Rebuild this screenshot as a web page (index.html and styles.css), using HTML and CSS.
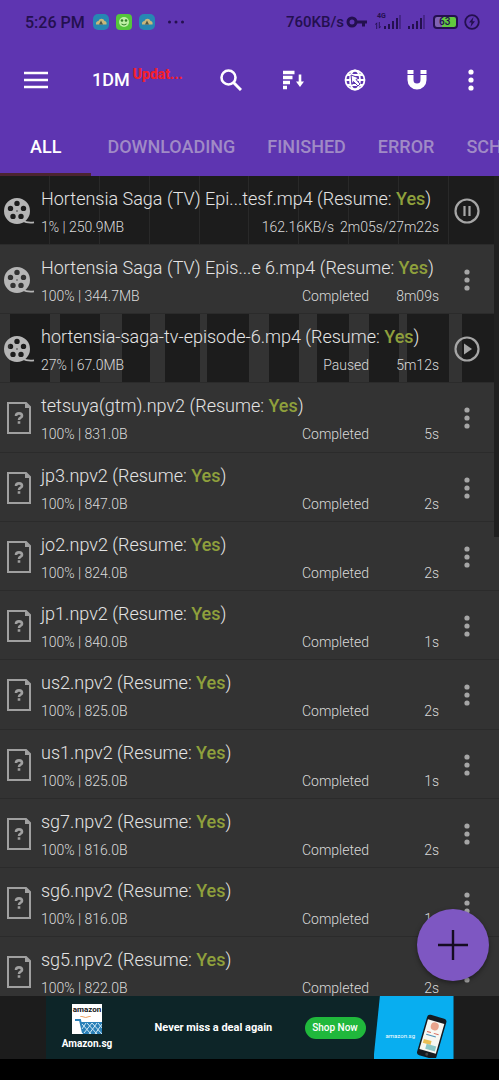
FILE: index.html
```
<!DOCTYPE html>
<html lang="en">
<head>
<meta charset="utf-8">
<meta name="viewport" content="width=device-width, initial-scale=1">
<title>1DM</title>
<link rel="stylesheet" href="styles.css">
</head>
<body>
<svg class="sprite" aria-hidden="true">
  <symbol id="reel" viewBox="0 0 32 28">
    <path fill="currentColor" fill-rule="evenodd" d="M14 1a13 13 0 1 0 0 26a13 13 0 1 0 0-26zM14 3.700a2.700 2.700 0 1 1 0 5.400a2.700 2.700 0 1 1 0-5.400zM7.500 8.700a2.700 2.700 0 1 1 0 5.400a2.700 2.700 0 1 1 0-5.400zM20.500 8.700a2.700 2.700 0 1 1 0 5.400a2.700 2.700 0 1 1 0-5.400zM10 16.700a2.700 2.700 0 1 1 0 5.400a2.700 2.700 0 1 1 0-5.400zM18 16.700a2.700 2.700 0 1 1 0 5.400a2.700 2.700 0 1 1 0-5.400zM14 13.300a.7 .7 0 1 1 0 1.400a.7 .7 0 1 1 0-1.400z"/>
    <path fill="none" stroke="currentColor" stroke-width="1.800" d="M19 23.500c4 2 8 2.500 12 1.800"/>
  </symbol>
  <symbol id="file" viewBox="0 0 24 32">
    <path fill="none" stroke="currentColor" stroke-width="2" d="M1 1h18l4 4v26H1z"/>
    <path fill="currentColor" d="M18 1h1l4 4v1h-5z"/>
    <path fill="none" stroke="currentColor" stroke-width="2.600" d="M9 14c0-3.500 6-3.500 6 0c0 2-3 1.500-3 4M12 19.300v2.500"/>
  </symbol>
  <symbol id="dots" viewBox="0 0 6 22">
    <g fill="currentColor"><circle cx="3" cy="3" r="2.600"/><circle cx="3" cy="11" r="2.600"/><circle cx="3" cy="19" r="2.600"/></g>
  </symbol>
  <symbol id="pause" viewBox="0 0 26 26">
    <g fill="none" stroke="currentColor" stroke-width="2.200"><circle cx="13" cy="13" r="11.500"/><path d="M10.500 8v10M15.500 8v10"/></g>
  </symbol>
  <symbol id="play" viewBox="0 0 26 26">
    <circle cx="13" cy="13" r="11.500" fill="none" stroke="currentColor" stroke-width="2.200"/><path fill="currentColor" d="M10 7.500l8 5.500l-8 5.500z"/>
  </symbol>
  <symbol id="cloud" viewBox="0 0 16 16">
    <rect width="16" height="16" rx="5" fill="#2787b3"/><path fill="#c9b77b" d="M3 10.500c-.5-2 1-3.500 2.500-3.500c1-3 5-3 6 0c1.500 0 2.500 1.500 2 3.500z"/><path fill="#4d5646" d="M8 6.500l2 4H6z"/>
  </symbol>
  <symbol id="signal" viewBox="0 0 18 14">
    <path fill="currentColor" d="M1 11h2v3H1zM5 9h2v5H5zM9 6h2v8H9zM13 3h2v11h-2z"/><path fill="currentColor" opacity=".4" d="M16 0h2v14h-2z"/>
  </symbol>
</svg>

<div class="app">
  <header class="header">
    <div class="statusbar">
      <span class="clock">5:26 PM</span>
      <svg class="badge" viewBox="0 0 16 16"><use href="#cloud"/></svg>
      <svg class="badge" viewBox="0 0 16 16"><rect width="16" height="16" rx="4" fill="#54c63c"/><circle cx="8" cy="8" r="5" fill="#bdf0a4"/><circle cx="6" cy="6.500" r="1.300" fill="#328028"/><circle cx="10" cy="6.500" r="1.300" fill="#328028"/><path d="M5.500 10q2.500 2 5 0" fill="none" stroke="#328028"/></svg>
      <svg class="badge" viewBox="0 0 16 16"><use href="#cloud"/></svg>
      <svg class="more" viewBox="0 0 17 4"><g fill="currentColor"><circle cx="2" cy="2" r="1.500"/><circle cx="8.500" cy="2" r="1.500"/><circle cx="15" cy="2" r="1.500"/></g></svg>
      <span class="speed">760KB/s</span>
      <svg class="key" viewBox="0 0 21 12"><circle cx="6" cy="6" r="4" fill="none" stroke="currentColor" stroke-width="3"/><path fill="currentColor" d="M10 4.500h11v3h-2v3h-3v-3h-6z"/></svg>
      <span class="cell"><span class="gen">4G</span><svg class="data" viewBox="0 0 6 8"><path stroke="currentColor" fill="none" d="M1.500 8V1L0 3M4.500 0v7L6 5"/></svg><svg class="bars" viewBox="0 0 18 14"><use href="#signal"/></svg></span>
      <svg class="bars second" viewBox="0 0 18 14"><use href="#signal"/></svg>
      <span class="battery">63</span>
      <svg class="saver" viewBox="0 0 16 16"><circle cx="8" cy="8" r="6.800" fill="none" stroke="currentColor" stroke-width="1.800"/><path fill="currentColor" d="M9.500 3L5 8.500h2.500L6.500 13L11 7.300H8.500z"/></svg>
    </div>
    <div class="toolbar">
      <button class="menu" aria-label="Menu"><svg viewBox="0 0 24 18"><path stroke="currentColor" stroke-width="2.600" d="M0 2h24M0 9h24M0 16h24"/></svg></button>
      <h1 class="title">1DM</h1>
      <a class="update" href="#">Updat...</a>
      <div class="actions">
        <button aria-label="Search"><svg class="icon" viewBox="0 0 22 22"><circle cx="8.500" cy="8.500" r="7" fill="none" stroke="currentColor" stroke-width="2.600"/><path stroke="currentColor" stroke-width="3" d="M13.500 13.500l7.500 7.500"/></svg></button>
        <button aria-label="Sort"><svg class="icon" viewBox="0 0 22 22"><path stroke="currentColor" stroke-width="3.400" d="M1 3.500h11.500M1 8.500h9.500M1 13.500h7M1 18.500h4"/><path stroke="currentColor" stroke-width="2.600" d="M18 5.500v9"/><path fill="currentColor" d="M14 12.500h8L18 18z"/></svg></button>
        <button aria-label="Browser"><svg class="icon" viewBox="0 0 22 22"><g fill="none" stroke="currentColor" stroke-width="1.800"><circle cx="11" cy="11" r="9.500"/><ellipse cx="11" cy="11" rx="5" ry="9.500"/><path d="M3 6h16M1.500 11h19M3 16h16"/></g><path fill="currentColor" stroke="#5e35b1" stroke-width="1" d="M7 6l8 3l-3 1.500l4 4.500l-2 2l-4.500-4.500l-1.500 3z"/></svg></button>
        <button aria-label="Torrent"><svg class="icon" viewBox="0 0 22 22"><path fill="currentColor" d="M1.500 1h6v4h-6zM14.500 1h6v4h-6zM1.500 6h6v5a3.500 3.500 0 0 0 7 0V6h6v5a9.500 9.500 0 0 1-19 0z"/></svg></button>
        <button class="overflow" aria-label="More options"><svg class="dots" viewBox="0 0 6 22"><use href="#dots"/></svg></button>
      </div>
    </div>
    <nav class="tabs">
      <a class="tab active" href="#">ALL</a>
      <a class="tab" href="#">DOWNLOADING</a>
      <a class="tab" href="#">FINISHED</a>
      <a class="tab" href="#">ERROR</a>
      <a class="tab" href="#">SCHEDULED</a>
    </nav>
  </header>

  <main class="content">
    <ul class="list">
      <li class="row running"><svg class="reel" viewBox="0 0 32 28"><use href="#reel"/></svg><div class="info"><div class="name">Hortensia Saga (TV) Epi...tesf.mp4 (Resume: <b>Yes</b>)</div><div class="meta"><span>1% | 250.9MB</span><span class="state">162.16KB/s</span><span class="time">2m05s/27m22s</span></div></div><button class="act" aria-label="Pause"><svg class="round" viewBox="0 0 26 26"><use href="#pause"/></svg></button></li>
      <li class="row"><svg class="reel" viewBox="0 0 32 28"><use href="#reel"/></svg><div class="info"><div class="name">Hortensia Saga (TV) Epis...e 6.mp4 (Resume: <b>Yes</b>)</div><div class="meta"><span>100% | 344.7MB</span><span class="state">Completed</span><span class="time">8m09s</span></div></div><button class="act" aria-label="Options"><svg class="dots" viewBox="0 0 6 22"><use href="#dots"/></svg></button></li>
      <li class="row paused"><svg class="reel" viewBox="0 0 32 28"><use href="#reel"/></svg><div class="info"><div class="name">hortensia-saga-tv-episode-6.mp4 (Resume: <b>Yes</b>)</div><div class="meta"><span>27% | 67.0MB</span><span class="state">Paused</span><span class="time">5m12s</span></div></div><button class="act" aria-label="Resume"><svg class="round" viewBox="0 0 26 26"><use href="#play"/></svg></button></li>
      <li class="row"><svg class="file" viewBox="0 0 24 32"><use href="#file"/></svg><div class="info"><div class="name">tetsuya(gtm).npv2 (Resume: <b>Yes</b>)</div><div class="meta"><span>100% | 831.0B</span><span class="state">Completed</span><span class="time">5s</span></div></div><button class="act" aria-label="Options"><svg class="dots" viewBox="0 0 6 22"><use href="#dots"/></svg></button></li>
      <li class="row"><svg class="file" viewBox="0 0 24 32"><use href="#file"/></svg><div class="info"><div class="name">jp3.npv2 (Resume: <b>Yes</b>)</div><div class="meta"><span>100% | 847.0B</span><span class="state">Completed</span><span class="time">2s</span></div></div><button class="act" aria-label="Options"><svg class="dots" viewBox="0 0 6 22"><use href="#dots"/></svg></button></li>
      <li class="row"><svg class="file" viewBox="0 0 24 32"><use href="#file"/></svg><div class="info"><div class="name">jo2.npv2 (Resume: <b>Yes</b>)</div><div class="meta"><span>100% | 824.0B</span><span class="state">Completed</span><span class="time">2s</span></div></div><button class="act" aria-label="Options"><svg class="dots" viewBox="0 0 6 22"><use href="#dots"/></svg></button></li>
      <li class="row"><svg class="file" viewBox="0 0 24 32"><use href="#file"/></svg><div class="info"><div class="name">jp1.npv2 (Resume: <b>Yes</b>)</div><div class="meta"><span>100% | 840.0B</span><span class="state">Completed</span><span class="time">1s</span></div></div><button class="act" aria-label="Options"><svg class="dots" viewBox="0 0 6 22"><use href="#dots"/></svg></button></li>
      <li class="row"><svg class="file" viewBox="0 0 24 32"><use href="#file"/></svg><div class="info"><div class="name">us2.npv2 (Resume: <b>Yes</b>)</div><div class="meta"><span>100% | 825.0B</span><span class="state">Completed</span><span class="time">2s</span></div></div><button class="act" aria-label="Options"><svg class="dots" viewBox="0 0 6 22"><use href="#dots"/></svg></button></li>
      <li class="row"><svg class="file" viewBox="0 0 24 32"><use href="#file"/></svg><div class="info"><div class="name">us1.npv2 (Resume: <b>Yes</b>)</div><div class="meta"><span>100% | 825.0B</span><span class="state">Completed</span><span class="time">1s</span></div></div><button class="act" aria-label="Options"><svg class="dots" viewBox="0 0 6 22"><use href="#dots"/></svg></button></li>
      <li class="row"><svg class="file" viewBox="0 0 24 32"><use href="#file"/></svg><div class="info"><div class="name">sg7.npv2 (Resume: <b>Yes</b>)</div><div class="meta"><span>100% | 816.0B</span><span class="state">Completed</span><span class="time">2s</span></div></div><button class="act" aria-label="Options"><svg class="dots" viewBox="0 0 6 22"><use href="#dots"/></svg></button></li>
      <li class="row"><svg class="file" viewBox="0 0 24 32"><use href="#file"/></svg><div class="info"><div class="name">sg6.npv2 (Resume: <b>Yes</b>)</div><div class="meta"><span>100% | 816.0B</span><span class="state">Completed</span><span class="time">1s</span></div></div><button class="act" aria-label="Options"><svg class="dots" viewBox="0 0 6 22"><use href="#dots"/></svg></button></li>
      <li class="row"><svg class="file" viewBox="0 0 24 32"><use href="#file"/></svg><div class="info"><div class="name">sg5.npv2 (Resume: <b>Yes</b>)</div><div class="meta"><span>100% | 822.0B</span><span class="state">Completed</span><span class="time">2s</span></div></div><button class="act" aria-label="Options"><svg class="dots" viewBox="0 0 6 22"><use href="#dots"/></svg></button></li>
    </ul>
    <div class="thumb"></div>
    <button class="fab" aria-label="Add download"><svg viewBox="0 0 32 32"><path stroke="currentColor" stroke-width="2.400" d="M16 1v30M1 16h30"/></svg></button>
  </main>

  <aside class="adbar">
    <div class="ad">
      <div class="brand">
        <div class="logo"><span>amazon</span><svg viewBox="0 0 30 18"><path d="M8 0q6 3 11 0" fill="none" stroke="#f0a060"/><path d="M3 4h5l3 13" fill="none" stroke="#2a80b8" stroke-width="2"/><path fill="#2a80b8" d="M8 6h22v12H11z"/><path stroke="#cfe8f5" fill="none" d="M10 8l9 10M15 7l10 11M20 7l10 11M26 7l4 5M14 7l-4 6M20 7l-8 10M25 7l-8 11M30 8l-7 10"/></svg></div>
        <span class="seller">Amazon.sg</span>
      </div>
      <p class="slogan">Never miss a deal again</p>
      <button class="shop">Shop Now</button>
      <div class="promo">
        <span>amazon.sg</span>
        <svg viewBox="0 0 34 44"><g transform="rotate(16 17 22)"><rect x="7" y="2" width="20" height="42" rx="3" fill="#151a20"/><rect x="8.500" y="7" width="17" height="31" fill="#f7f7f2"/><circle cx="17" cy="12" r="4" fill="#e9a48c"/><path stroke="#d7685b" d="M11 19h4M18 19h5"/><path stroke="#4d92ba" d="M11 22h10"/><path fill="#eabf55" d="M10 27h8v4h-8z"/><path fill="#8cc7c7" d="M14 31h10v5H14z"/><circle cx="17" cy="41" r="1.500" fill="#444"/></g></svg>
      </div>
    </div>
  </aside>
</div>
</body>
</html>
```
FILE: styles.css
```
* { box-sizing: border-box; }
body { margin: 0; background: #000; color: #d6d6d6; font-family: Roboto, "Liberation Sans", sans-serif; }
button { border: 0; padding: 0; background: none; color: inherit; font: inherit; }
a { color: inherit; text-decoration: none; }
svg { display: block; flex: none; }
.sprite { position: absolute; width: 0; height: 0; }
.app { display: flex; flex-direction: column; height: 100vh; padding-bottom: 21px; overflow: hidden; }

.header { flex: none; background: #5e35b1; }
.statusbar { display: flex; align-items: center; height: 44px; padding: 0 19px 0 25px; color: #24104f; font-size: 16px; font-weight: 500; }
.clock { margin-right: 8px; }
.badge { width: 16px; height: 16px; margin-right: 7px; }
.more { width: 18px; height: 4px; margin-left: 5px; }
.speed { margin-left: auto; font-size: 15px; }
.key { width: 21px; height: 12px; margin: 0 8px 0 2px; }
.cell { display: flex; align-items: flex-end; position: relative; margin-right: 6px; }
.gen { position: absolute; left: 2px; top: -3px; font-size: 7px; line-height: 8px; font-weight: 700; }
.data { width: 6px; height: 7px; margin-right: 2px; }
.bars { width: 18px; height: 14px; }
.second { margin-right: 8px; }
.battery { width: 25px; height: 14px; margin-right: 6px; padding-left: 4px; border: 2px solid #24104f; border-radius: 4px; background: linear-gradient(90deg, #8063b4 35%, #62c93f 35%); font-size: 10px; line-height: 10px; }
.saver { width: 16px; height: 16px; }

.toolbar { display: flex; align-items: center; height: 72px; padding: 0 5px 0 24px; color: #fff; }
.menu { flex: none; width: 24px; }
.title { margin: 0 3px 0 44px; font-size: 18px; line-height: 24px; font-weight: 500; }
.update { align-self: flex-start; margin-top: 21px; color: #f0202e; font-size: 14px; line-height: 18px; font-weight: 900; }
.actions { display: flex; align-items: center; margin-left: auto; }
.actions button { display: grid; place-items: center; width: 62px; height: 48px; }
.actions .overflow { width: 46px; }
.icon { width: 22px; height: 22px; }
.dots { width: 6px; height: 22px; }

.tabs { display: flex; height: 60px; overflow: hidden; color: #a08bc6; font-size: 18px; font-weight: 500; }
.tab { flex: none; padding: 0 16px; line-height: 62px; }
.tab.active { padding: 0 30px; color: #fff; border-bottom: 3px solid #4b2430; }

.content { position: relative; flex: 1; min-height: 0; overflow: hidden; background: #333; }
.list { margin: 0; padding: 0; list-style: none; }
.row { display: flex; align-items: center; height: 69px; padding: 1px 4px 0 3px; border-bottom: 1px solid #2b2b2b; }
.row:nth-child(4n) { height: 70px; }
.reel { width: 32px; height: 28px; margin-right: 6px; color: #b5b5b5; }
.file { width: 24px; height: 32px; margin: 0 10px 0 4px; color: #a0a0a0; }
.info { flex: 1; min-width: 0; padding-top: 2px; white-space: nowrap; }
.name { font-size: 18px; line-height: 24px; font-weight: 300; color: #e4e4e4; }
.name b { font-weight: 500; color: #8fa03c; }
.meta { display: flex; margin-top: 6px; font-size: 14px; line-height: 20px; font-weight: 300; color: #dadada; }
.state { margin-left: auto; }
.time { min-width: 70px; padding-left: 6px; text-align: right; }
.act { display: grid; place-items: center; flex: none; width: 56px; height: 48px; color: #a6a6a6; }
.round { width: 26px; height: 26px; }
.running { background: repeating-linear-gradient(90deg, #1c1c1c 0 calc(10vw - 1px), #292929 calc(10vw - 1px) 10vw); }
.paused { background: linear-gradient(90deg, #333 2%, #1c1c1c 2% 10%, #333 10% 12%, #1c1c1c 12% 20%, #333 20% 24.5%, #1c1c1c 24.5% 30%, #333 30% 33%, #1c1c1c 33% 40%, #333 40% 41.5%, #1c1c1c 41.5% 50%, #333 50% 54%, #1c1c1c 54% 60%, #333 60% 63.5%, #1c1c1c 63.5% 70%, #333 70% 74%, #1c1c1c 74% 80%, #333 80% 81.5%, #1c1c1c 81.5% 90%, #333 90% 92.5%, #1c1c1c 92.5%); }
.thumb { position: absolute; top: 0; right: 0; width: 5px; height: 44%; background: #202020; }
.fab { position: absolute; right: 10px; bottom: 15px; display: grid; place-items: center; width: 72px; height: 72px; border-radius: 50%; background: #7e57c2; color: #150c22; box-shadow: 0 2px 5px rgba(0, 0, 0, .4); }
.fab svg { width: 32px; height: 32px; }

.adbar { display: flex; justify-content: center; flex: none; height: 63px; background: #1c1c1c; }
.ad { display: flex; align-items: center; width: 408px; background: #0d2528; color: #fff; }
.brand { display: flex; flex-direction: column; align-items: center; width: 83px; }
.logo { width: 30px; height: 30px; background: #fff; color: #111; text-align: center; font-size: 8px; line-height: 12px; font-weight: 700; }
.logo span { display: block; }
.logo svg { width: 30px; height: 18px; }
.seller { margin-top: 3px; font-size: 10px; line-height: 14px; font-weight: 700; }
.slogan { margin: 0 0 0 26px; font-size: 11px; font-weight: 700; white-space: nowrap; }
.shop { width: 61px; height: 22px; margin-left: auto; border-radius: 11px; background: #20b83c; color: #fff; font-size: 10px; font-weight: 500; }
.promo { display: flex; align-items: center; align-self: stretch; width: 80px; margin-left: 8px; padding: 16px 0 0 12px; background: #08aef0; clip-path: polygon(8% 0, 100% 0, 100% 100%, 0 100%); font-size: 6px; }
.promo svg { width: 34px; height: 44px; }
```
